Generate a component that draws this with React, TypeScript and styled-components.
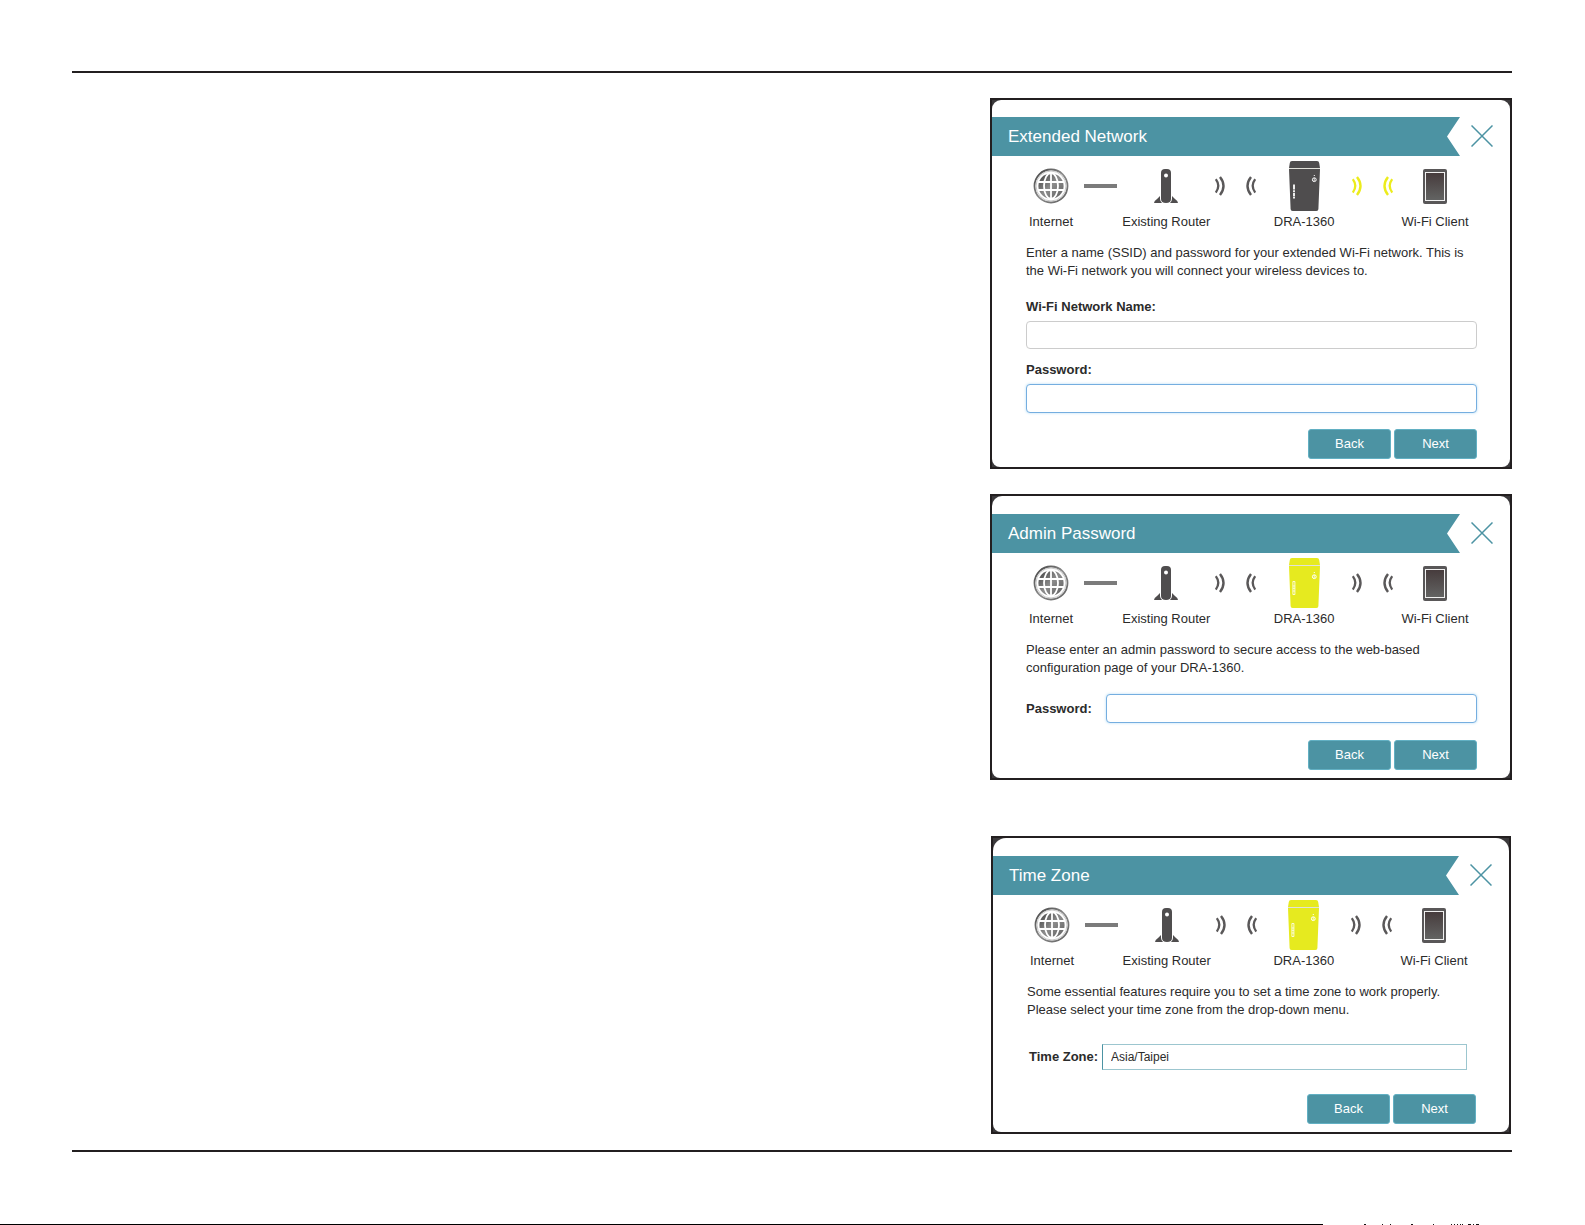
import React, { useId, type ReactNode } from "react";
import styled, { createGlobalStyle, css } from "styled-components";

const ink = "#231f20";
const teal = "#4c93a3";
const slate = "#4f4d4e";
const lime = "#e6ea1f";

const GlobalStyle = createGlobalStyle`
  *, *::before, *::after { box-sizing: border-box; }
  body {
    margin: 0;
    background: #fff;
    color: #2b2b2b;
    font-family: "Liberation Sans", Arial, Helvetica, sans-serif;
    font-size: 13px;
    line-height: 18px;
  }
`;

const Page = styled.div`
  display: flex;
  flex-direction: column;
  min-height: 100vh;
`;

const Sheet = styled.main`
  display: flex;
  flex-direction: column;
  margin: 71px 73px 0 72px;
  padding: 25px 0 16px;
  border-top: 2px solid ${ink};
  border-bottom: 2px solid ${ink};
`;

const Figures = styled.div`
  align-self: flex-end;
  display: flex;
  flex-direction: column;
  width: 522px;
  max-width: 100%;
`;

const Frame = styled.section<{ $before?: number; $inset?: number }>`
  margin: ${(p) => p.$before ?? 0}px ${(p) => p.$inset ?? 0}px 0;
  border: 2px solid ${ink};
  background: #3b393b;
`;

const Panel = styled.div<{ $radius: number; $top: number }>`
  padding: ${(p) => p.$top}px 0 8px;
  background: #fff;
  border-radius: ${(p) => p.$radius}px ${(p) => p.$radius}px 8px 8px;
`;

const TitleRow = styled.header`
  display: flex;
  align-items: center;
  gap: 11px;
  padding-right: 17px;
`;

const Title = styled.h2`
  flex: 1;
  margin: 0;
  padding-left: 16px;
  background: ${teal};
  color: #fff;
  font-size: 17px;
  font-weight: 400;
  line-height: 39px;
  clip-path: polygon(0 0, 100% 0, calc(100% - 13px) 50%, 100% 100%, 0 100%);
`;

const CloseButton = styled.button`
  display: flex;
  padding: 0 0 2px;
  border: 0;
  background: none;
  color: ${teal};
`;

const Content = styled.div`
  padding: 5px 33px 0 34px;
`;

const Topology = styled.div`
  display: grid;
  grid-template-columns: 50px 49fr 82px 57fr 79px 57fr 68px;
  padding-right: 8px;
`;

const Node = styled.div`
  display: flex;
  flex-direction: column;
  align-items: center;
  gap: 2px;
  white-space: nowrap;
`;

const Glyph = styled.div`
  display: flex;
  align-items: center;
  justify-content: center;
  height: 50px;
`;

const Signal = styled(Glyph)<{ $active?: boolean }>`
  gap: 21px;
  color: ${(p) => (p.$active ? "#ecec1c" : "#5a5859")};
`;

const Cable = styled.span`
  width: 33px;
  height: 4px;
  background: #7b7b7b;
`;

const Hint = styled.p`
  margin: 13px 0 0;
`;

const Stack = styled.div<{ $before: number }>`
  display: flex;
  flex-direction: column;
  gap: 5px;
  margin-top: ${(p) => p.$before}px;
`;

const Inline = styled.div<{ $before: number; $left?: number; $right?: number; $label: number }>`
  display: grid;
  grid-template-columns: ${(p) => p.$label}px 1fr;
  align-items: center;
  margin-top: ${(p) => p.$before}px;
  padding: 0 ${(p) => p.$right ?? 0}px 0 ${(p) => p.$left ?? 0}px;
`;

const Label = styled.label`
  font-weight: 700;
  white-space: nowrap;
`;

const TextBox = styled.input<{ $active?: boolean }>`
  width: 100%;
  height: 28px;
  padding: 0 8px;
  border: 1px solid #ccc;
  border-radius: 4px;
  background: #fff;
  font: inherit;
  outline: 0;
  ${(p) =>
    p.$active &&
    css`
      height: 29px;
      border-color: #75aee0;
      box-shadow: 0 0 3px #b5dcf5;
    `}
`;

const Picker = styled.select`
  appearance: none;
  width: 100%;
  height: 26px;
  padding: 0 8px;
  border: 1px solid #9cc6cf;
  border-left-color: ${teal};
  border-radius: 0;
  background: #fff;
  color: inherit;
  font-family: inherit;
  font-size: 12px;
`;

const Actions = styled.div<{ $before: number }>`
  display: flex;
  justify-content: flex-end;
  gap: 3px;
  margin-top: ${(p) => p.$before}px;
`;

const ActionButton = styled.button`
  width: 83px;
  height: 30px;
  padding: 0;
  border: 1px solid #62b0c3;
  border-radius: 3px;
  background: ${teal};
  color: #fff;
  font: inherit;
`;

const PageEdge = styled.div`
  display: flex;
  gap: 39px;
  margin-top: auto;
`;

const EdgeLine = styled.div`
  flex: 0 0 83.5%;
  height: 1px;
  background: #000;
`;

const EdgeMarks = styled.svg`
  display: block;
`;

function Globe() {
  const id = useId();
  return (
    <svg width="36" height="36" viewBox="0 0 36 36" fill="none" aria-hidden="true">
      <defs>
        <linearGradient id={id} x1="0" y1="0" x2="1" y2="1">
          <stop offset="0" stopColor="#3f3f3f" />
          <stop offset="0.5" stopColor="#8c8c8c" />
          <stop offset="1" stopColor="#5e5e5e" />
        </linearGradient>
      </defs>
      <circle cx="18" cy="18" r="16.5" stroke={`url(#${id})`} strokeWidth="1.8" />
      <circle cx="18" cy="18" r="15" stroke="#c9c9c9" strokeWidth="1" />
      <circle cx="18" cy="18" r="12.6" fill={`url(#${id})`} />
      <g stroke="#fff" strokeWidth="1.8">
        <path d="M18 5v26M5 14h26M5 22h26" />
        <ellipse cx="18" cy="18" rx="7" ry="13" />
      </g>
    </svg>
  );
}

function Router() {
  return (
    <svg width="24" height="35" viewBox="0 0 24 35" fill={slate} aria-hidden="true">
      <path d="M7 4a4 4 0 0 1 4-4h2a4 4 0 0 1 4 4v26q0 4-5 4t-5-4z" />
      <path d="M6 27v3q0 2 2 4H0q0-2 3-4zM18 27v3q0 2-2 4h8q0-2-3-4z" />
      <circle cx="12" cy="6.5" r="2" fill="#fff" />
    </svg>
  );
}

function Waves({ incoming }: { incoming?: boolean }) {
  return (
    <svg width="10" height="20" viewBox="0 0 10 20" fill="none" stroke="currentColor" aria-hidden="true">
      <g transform={incoming ? "matrix(-1 0 0 1 10 0)" : undefined}>
        <path d="M.8 3.2q5 6.6 0 13.4" strokeWidth="2.3" />
        <path d="M5 1q7 8.8 0 18" strokeWidth="2.4" />
      </g>
    </svg>
  );
}

function Extender({ active }: { active?: boolean }) {
  return (
    <svg width="31" height="50" viewBox="0 0 31 50" fill={active ? lime : slate} aria-hidden="true">
      <path d="M.8 2q.2-2 2.2-2h25q2 0 2.2 2l.8 5H0z" />
      <path d="M0 8h31l-1.6 40q0 2-2 2H3.6q-2 0-2-2z" />
      <path d="M0 7.5h31" stroke="#d9d9d0" strokeWidth=".8" />
      <g fill="none" stroke="#fff">
        <path d="M25.3 14v1" strokeWidth="1" />
        <circle cx="25.3" cy="18.7" r="1.9" strokeWidth="1" />
        <path d="M25.3 17v3" strokeWidth=".7" />
        {active ? (
          <>
            <path d="M3.9 23.5h2v13h-2z" strokeWidth=".8" />
            <path d="M3.9 28h2M3.9 30.3h2M3.9 33h2" strokeWidth=".8" />
          </>
        ) : (
          <path d="M5 23.5v14" strokeWidth="1.8" strokeDasharray="5 .7 2 .7 3 .7" />
        )}
      </g>
    </svg>
  );
}

function Tablet() {
  const id = useId();
  return (
    <svg width="24" height="35" viewBox="0 0 24 35" aria-hidden="true">
      <defs>
        <linearGradient id={id} x1="0" y1="0" x2="0" y2="1">
          <stop offset="0" stopColor="#463b3c" />
          <stop offset="1" stopColor="#636463" />
        </linearGradient>
      </defs>
      <rect width="24" height="35" rx="2" fill="#595758" />
      <rect x="2.5" y="3.5" width="19" height="28" fill={`url(#${id})`} stroke="#f1f1f1" />
    </svg>
  );
}

function Cross() {
  return (
    <svg width="22" height="22" viewBox="0 0 22 22" fill="none" stroke="currentColor" strokeWidth="1.5" aria-hidden="true">
      <path d="M.5.5l21 21M21.5.5l-21 21" />
    </svg>
  );
}

type DialogProps = {
  title: string;
  hint: string;
  highlight: "device" | "signal";
  radius: number;
  top: number;
  before?: number;
  inset?: number;
  actionGap: number;
  children: ReactNode;
};

function SetupDialog({ title, hint, highlight, radius, top, before, inset, actionGap, children }: DialogProps) {
  return (
    <Frame $before={before} $inset={inset}>
      <Panel $radius={radius} $top={top}>
        <TitleRow>
          <Title>{title}</Title>
          <CloseButton type="button" aria-label="Close">
            <Cross />
          </CloseButton>
        </TitleRow>
        <Content>
          <Topology>
            <Node>
              <Glyph><Globe /></Glyph>
              Internet
            </Node>
            <Glyph><Cable /></Glyph>
            <Node>
              <Glyph><Router /></Glyph>
              Existing Router
            </Node>
            <Signal>
              <Waves />
              <Waves incoming />
            </Signal>
            <Node>
              <Glyph><Extender active={highlight === "device"} /></Glyph>
              DRA-1360
            </Node>
            <Signal $active={highlight === "signal"}>
              <Waves />
              <Waves incoming />
            </Signal>
            <Node>
              <Glyph><Tablet /></Glyph>
              Wi-Fi Client
            </Node>
          </Topology>
          <Hint>{hint}</Hint>
          {children}
          <Actions $before={actionGap}>
            <ActionButton type="button">Back</ActionButton>
            <ActionButton type="button">Next</ActionButton>
          </Actions>
        </Content>
      </Panel>
    </Frame>
  );
}

export default function App() {
  return (
    <Page>
      <GlobalStyle />
      <Sheet>
        <Figures>
          <SetupDialog
            title="Extended Network"
            hint="Enter a name (SSID) and password for your extended Wi-Fi network. This is the Wi-Fi network you will connect your wireless devices to."
            highlight="signal"
            radius={9}
            top={17}
            actionGap={16}
          >
            <Stack $before={18}>
              <Label htmlFor="network-name">Wi-Fi Network Name:</Label>
              <TextBox id="network-name" type="text" />
            </Stack>
            <Stack $before={12}>
              <Label htmlFor="network-password">Password:</Label>
              <TextBox id="network-password" type="password" $active />
            </Stack>
          </SetupDialog>
          <SetupDialog
            title="Admin Password"
            hint="Please enter an admin password to secure access to the web-based configuration page of your DRA-1360."
            highlight="device"
            radius={10}
            top={18}
            before={25}
            actionGap={17}
          >
            <Inline $before={17} $label={80}>
              <Label htmlFor="admin-password">Password:</Label>
              <TextBox id="admin-password" type="password" $active />
            </Inline>
          </SetupDialog>
          <SetupDialog
            title="Time Zone"
            hint="Some essential features require you to set a time zone to work properly. Please select your time zone from the drop-down menu."
            highlight="device"
            radius={13}
            top={18}
            before={56}
            inset={1}
            actionGap={24}
          >
            <Inline $before={25} $left={2} $right={9} $label={73}>
              <Label htmlFor="time-zone">Time Zone:</Label>
              <Picker id="time-zone" defaultValue="Asia/Taipei">
                <option>Asia/Taipei</option>
              </Picker>
            </Inline>
          </SetupDialog>
        </Figures>
      </Sheet>
      <PageEdge>
        <EdgeLine />
        <EdgeMarks width="118" height="1" viewBox="0 0 118 1" aria-hidden="true">
          <path
            d="M2 .5h2M20 .5h1M28 .5h1M49 .5h2M71 .5h1M89 .5h1M92 .5h1M95 .5h1M98 .5h1M100 .5h1M106 .5h3M111 .5h1M114 .5h3"
            stroke="#111"
          />
        </EdgeMarks>
      </PageEdge>
    </Page>
  );
}
